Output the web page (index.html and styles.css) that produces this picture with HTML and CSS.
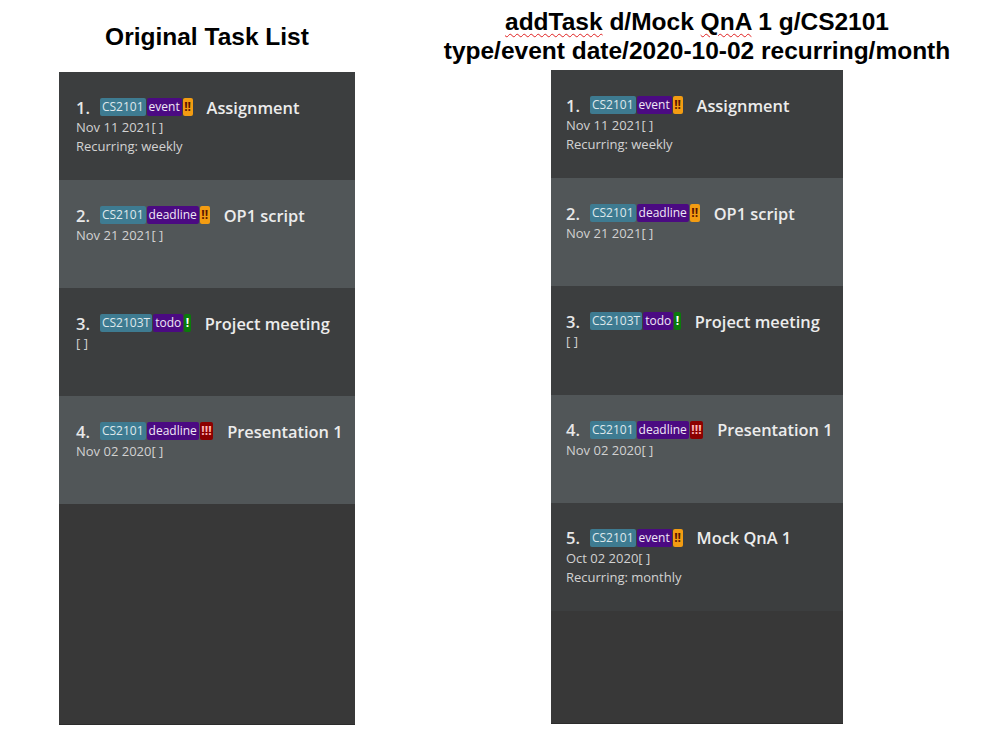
FILE: index.html
```html
<!DOCTYPE html>
<html>
<head>
<meta charset="utf-8">
<link rel="stylesheet" href="styles.css">
</head>
<body>
<div class="page">
  <section class="col col-left">
    <h1 class="head head-left">Original Task List</h1>
    <div class="panel panel-left">
      <div class="card odd">
        <div class="row"><span class="num">1.</span><span class="tags"><span class="tag mod">CS2101</span><span class="tag type">event</span><span class="tag pri med">!!</span></span><span class="title">Assignment</span></div>
        <div class="meta">Nov 11 2021[ ]</div>
        <div class="meta">Recurring: weekly</div>
      </div>
      <div class="card even">
        <div class="row"><span class="num">2.</span><span class="tags"><span class="tag mod">CS2101</span><span class="tag type">deadline</span><span class="tag pri med">!!</span></span><span class="title">OP1 script</span></div>
        <div class="meta">Nov 21 2021[ ]</div>
      </div>
      <div class="card odd">
        <div class="row"><span class="num">3.</span><span class="tags"><span class="tag mod">CS2103T</span><span class="tag type">todo</span><span class="tag pri low">!</span></span><span class="title">Project meeting</span></div>
        <div class="meta">[ ]</div>
      </div>
      <div class="card even">
        <div class="row"><span class="num">4.</span><span class="tags"><span class="tag mod">CS2101</span><span class="tag type">deadline</span><span class="tag pri high">!!!</span></span><span class="title">Presentation 1</span></div>
        <div class="meta">Nov 02 2020[ ]</div>
      </div>
    </div>
  </section>
  <section class="col col-right">
    <h1 class="head head-right"><span class="spell">addTask</span> d/Mock <span class="spell">QnA</span> 1 g/CS2101<br>type/event date/2020-10-02 recurring/month</h1>
    <div class="panel panel-right">
      <div class="card odd">
        <div class="row"><span class="num">1.</span><span class="tags"><span class="tag mod">CS2101</span><span class="tag type">event</span><span class="tag pri med">!!</span></span><span class="title">Assignment</span></div>
        <div class="meta">Nov 11 2021[ ]</div>
        <div class="meta">Recurring: weekly</div>
      </div>
      <div class="card even">
        <div class="row"><span class="num">2.</span><span class="tags"><span class="tag mod">CS2101</span><span class="tag type">deadline</span><span class="tag pri med">!!</span></span><span class="title">OP1 script</span></div>
        <div class="meta">Nov 21 2021[ ]</div>
      </div>
      <div class="card odd">
        <div class="row"><span class="num">3.</span><span class="tags"><span class="tag mod">CS2103T</span><span class="tag type">todo</span><span class="tag pri low">!</span></span><span class="title">Project meeting</span></div>
        <div class="meta">[ ]</div>
      </div>
      <div class="card even">
        <div class="row"><span class="num">4.</span><span class="tags"><span class="tag mod">CS2101</span><span class="tag type">deadline</span><span class="tag pri high">!!!</span></span><span class="title">Presentation 1</span></div>
        <div class="meta">Nov 02 2020[ ]</div>
      </div>
      <div class="card odd">
        <div class="row"><span class="num">5.</span><span class="tags"><span class="tag mod">CS2101</span><span class="tag type">event</span><span class="tag pri med">!!</span></span><span class="title">Mock QnA 1</span></div>
        <div class="meta">Oct 02 2020[ ]</div>
        <div class="meta">Recurring: monthly</div>
      </div>
    </div>
  </section>
</div>
</body>
</html>
```

FILE: styles.css
```css
* { box-sizing: border-box; }
html, body { margin: 0; padding: 0; background: #ffffff; }
body { width: 989px; height: 736px; overflow: hidden; }

.page {
  display: flex;
  align-items: flex-start;
  padding-left: 59px;
  gap: 196px;
}

.col { display: flex; flex-direction: column; }
.col-left { width: 296px; }
.col-right { width: 292px; }

.head {
  margin: 0;
  font-family: "Liberation Sans", Arial, sans-serif;
  font-weight: bold;
  font-size: 24.5px;
  color: #000;
  text-align: center;
  white-space: nowrap;
}
.head-left {
  padding-top: 23px;
  line-height: 28px;
  height: 72px;
}
.head-right {
  padding-top: 7px;
  line-height: 29px;
  height: 70px;
  margin: 0 -140px;
}
.spell {
  text-decoration: underline wavy #e02020;
  text-decoration-thickness: 1px;
  text-underline-offset: 3px;
}

.panel {
  background: #383838;
  display: flex;
  flex-direction: column;
  border-bottom: 1px solid #2c2c2c;
}
.panel-left { height: 653px; }
.panel-right { height: 654px; }

.card {
  height: 108px;
  padding-top: 24px;
  font-family: "Open Sans", "Noto Sans", sans-serif;
}
.panel-left .card { padding-left: 17px; }
.panel-right .card { padding-left: 15px; height: 108.2px; }
.card.odd { background: #3c3e3f; }
.card.even { background: #515658; }

.row {
  display: flex;
  align-items: center;
  height: 22px;
}
.num {
  font-size: 16.5px;
  font-weight: 600;
  color: #e8e8e8;
  margin-right: 10px;
}
.tags { display: flex; gap: 1px; margin-right: 14px; }
.tag {
  display: inline-block;
  height: 18px;
  line-height: 18px;
  font-size: 12px;
  padding: 0 2px;
  border-radius: 2px;
  color: #e6e6e6;
}
.tag.mod { background: #3e7b91; color: #dfe8ec; }
.tag.type { background: #4b0a82; color: #f0e8f6; }
.tag.pri { padding: 0 1.5px; font-weight: 700; font-size: 12px; }
.tag.med { background: #f39c12; color: #5a1400; }
.tag.low { background: #0b7a0b; color: #ffffff; }
.tag.high { background: #8b0000; color: #ffb8b8; }

.title {
  font-size: 16.4px;
  font-weight: 600;
  color: #ececec;
}

.meta {
  font-size: 13px;
  line-height: 19px;
  color: #d2d2d2;
}
```
